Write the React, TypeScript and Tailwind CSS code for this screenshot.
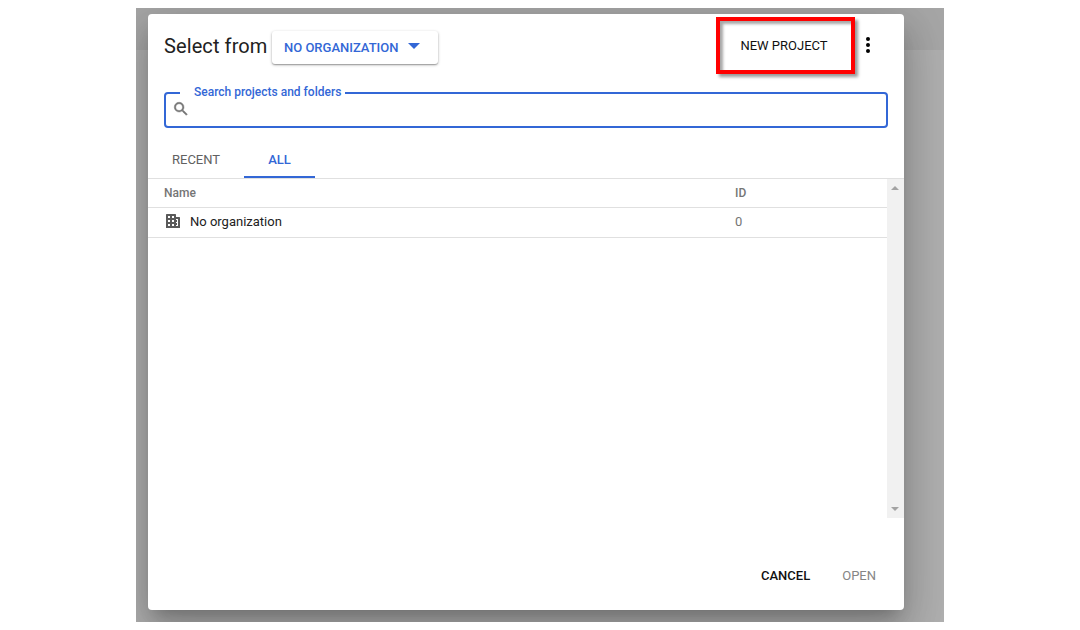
import React from "react";

function SearchIcon() {
  return (
    <svg viewBox="0 0 24 24" className="h-[18px] w-[18px] fill-[#757575] stroke-[#757575] stroke-[0.6]">
      <path d="M15.5 14h-.79l-.28-.27A6.471 6.471 0 0 0 16 9.5 6.5 6.5 0 1 0 9.5 16c1.61 0 3.09-.59 4.23-1.57l.27.28v.79l5 4.99L20.49 19l-4.99-5zm-6 0C7.01 14 5 11.99 5 9.5S7.01 5 9.5 5 14 7.01 14 9.5 11.99 14 9.5 14z" />
    </svg>
  );
}

function OrganizationIcon() {
  return (
    <svg viewBox="0 0 14 14" className="mb-[2px] h-[14px] w-[14px] fill-[#5a5a5a]">
      <path
        fillRule="evenodd"
        d="M.6 0H9.4l.6.6V3h3.4l.6.6V14H0V.6zM2 2v2h2V2zM6 2v2h2V2zM2 6v2h2V6zM6 6v2h2V6zM2 10v2h2v-2zM6 10v2h2v-2zM10 5v1h1v2h-1v1h1v2h-1v1h2V5z"
      />
    </svg>
  );
}

function Header() {
  return (
    <header className="flex h-[66px] pl-4">
      <h1 className="mt-[18px] w-[108px] whitespace-nowrap text-[20px] leading-7 tracking-[0.1px] text-[#212121]">
        Select from
      </h1>
      <button className="mt-[17px] flex h-[33px] w-[166px] items-center rounded-[3px] bg-white pl-3 text-[13px] font-medium whitespace-nowrap text-[#3367d6] shadow-[0_1px_3px_rgba(0,0,0,0.3),0_1px_1px_rgba(0,0,0,0.2)]">
        NO ORGANIZATION
        <svg viewBox="0 0 12 6" className="mb-[3px] ml-[10px] h-[6px] w-3 fill-[#3367d6]">
          <path d="M0 0h12L6 6z" />
        </svg>
      </button>
      <button className="mt-[3px] ml-auto h-[57px] w-[139px] border-4 border-[#ff0000] pt-px text-[13px] whitespace-nowrap text-[#111111] shadow-[3px_3px_3px_rgba(0,0,0,0.4),inset_3px_3px_3px_rgba(0,0,0,0.35)]">
        <span className="mr-[3px]">NEW PROJECT</span>
      </button>
      <button className="mt-[23px] mr-[34px] ml-[11px] h-4 w-1">
        <svg viewBox="0 0 4 16" className="h-4 w-1 fill-black">
          <circle cx="2" cy="2" r="2" />
          <circle cx="2" cy="8" r="2" />
          <circle cx="2" cy="14" r="2" />
        </svg>
      </button>
    </header>
  );
}

export default function App() {
  return (
    <div className="h-[630px] w-[1080px] overflow-hidden bg-white px-[136px] py-2 font-['Roboto',sans-serif]">
      <div className="h-[614px] w-[808px] overflow-hidden bg-[linear-gradient(#a6a6a6_42px,#afafaf_42px)] pt-1.5 pl-3">
        <section className="flex h-[596px] w-[756px] flex-col rounded bg-white shadow-[0_11px_15px_-7px_rgba(0,0,0,0.2),0_24px_38px_3px_rgba(0,0,0,0.14),0_9px_46px_8px_rgba(0,0,0,0.12)]">
          <Header />
          <div className="relative mx-4 mt-3 flex h-9 items-center rounded border-2 border-[#3367d6] pb-[2px] pl-1.5">
            <span className="absolute -top-[11px] left-[14px] bg-white pr-1 pl-[14px] text-[12px] leading-[18px] font-medium whitespace-nowrap text-[#3367d6]">
              Search projects and folders
            </span>
            <SearchIcon />
          </div>
          <nav className="flex h-[50px] items-end text-[13px] whitespace-nowrap">
            <span className="h-[26px] w-24 pl-6 leading-4 text-[#616161]">RECENT</span>
            <span className="h-[26px] w-[71px] border-b-2 border-[#3367d6] text-center leading-4 font-medium text-[#3367d6]">
              ALL
            </span>
          </nav>
          <div className="flex h-[340px] border-t border-[#e0e0e0]">
            <div className="w-[739px]">
              <div className="flex h-[29px] border-b border-[#e0e0e0] pl-4 text-[12px] leading-7 font-medium text-[#757575]">
                <span className="w-[571px]">Name</span>
                <span>ID</span>
              </div>
              <div className="flex h-[30px] items-center border-b border-[#e0e0e0] pb-px pl-[18px] text-[13px] text-[#212121]">
                <OrganizationIcon />
                <span className="ml-[10px] w-[545px]">No organization</span>
                <span className="text-[#757575]">0</span>
              </div>
            </div>
            <div className="flex w-[17px] flex-col items-center justify-between bg-[#f1f1f1] pt-[7px] pb-[7px]">
              <svg viewBox="0 0 8 4" className="mr-px h-1 w-2 fill-[#a3a3a3]">
                <path d="M0 4h8L4 0z" />
              </svg>
              <svg viewBox="0 0 8 4" className="mr-px h-1 w-2 fill-[#a3a3a3]">
                <path d="M0 0h8L4 4z" />
              </svg>
            </div>
          </div>
          <footer className="mt-[49px] flex justify-end gap-8 pr-7 text-[13px] leading-[18px] whitespace-nowrap">
            <button className="font-medium text-[#111111]">CANCEL</button>
            <button className="text-[#858585]">OPEN</button>
          </footer>
        </section>
      </div>
    </div>
  );
}
